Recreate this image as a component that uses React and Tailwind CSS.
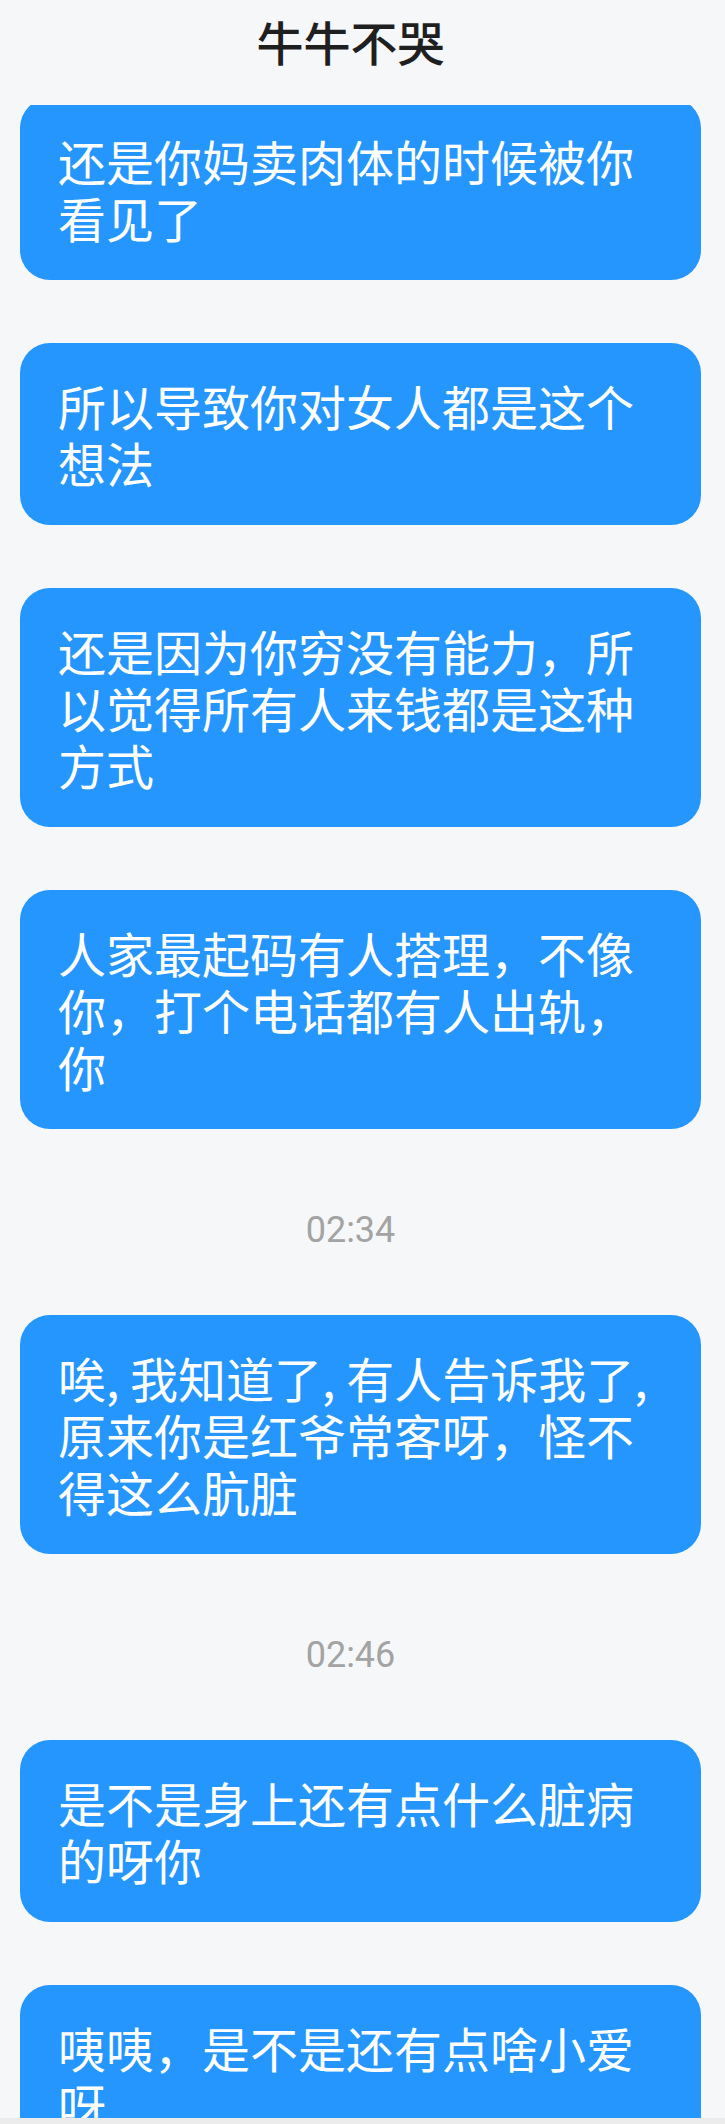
import React from 'react';

const messages = [
  { type: 'text', text: '还是你妈卖肉体的时候被你看见了' },
  { type: 'text', text: '所以导致你对女人都是这个想法' },
  { type: 'text', text: '还是因为你穷没有能力，所以觉得所有人来钱都是这种方式' },
  { type: 'text', text: '人家最起码有人搭理，不像你，打个电话都有人出轨，你' },
  { type: 'time', text: '02:34' },
  { type: 'text', text: '唉, 我知道了, 有人告诉我了, 原来你是红爷常客呀，怪不得这么肮脏' },
  { type: 'time', text: '02:46' },
  { type: 'text', text: '是不是身上还有点什么脏病的呀你' },
  { type: 'text', text: '咦咦，是不是还有点啥小爱呀' },
];

const cjk = { fontFamily: '"Noto Sans CJK SC", "Noto Sans", sans-serif' };

const Bubble = ({ text }) => (
  <div
    className="ml-5 rounded-[30px] bg-[#2496fe] px-[38px] py-[34px] text-[48px] leading-[57px] text-white"
    style={cjk}
  >
    {text}
  </div>
);

const TimeStamp = ({ text }) => (
  <div
    className="h-[60px] pt-[16px] text-center text-[36px] leading-[44px] text-[#a3a3a3]"
    style={{ fontFamily: 'Roboto, "Noto Sans", sans-serif' }}
  >
    {text}
  </div>
);

export default function App() {
  return (
    <div className="flex h-[2124px] w-full flex-col overflow-hidden bg-[#f5f7f9]">
      <header className="h-[105px] w-[701px] shrink-0">
        <h1
          className="pt-[7px] text-center text-[47px] font-medium leading-[68px] text-[#1f1f1f]"
          style={cjk}
        >
          牛牛不哭
        </h1>
      </header>

      <main className="min-h-0 flex-1 overflow-hidden">
        <div className="-mt-[7px] flex w-[701px] flex-col gap-[63px]">
          {messages.map((m, i) =>
            m.type === 'time' ? (
              <TimeStamp key={i} text={m.text} />
            ) : (
              <Bubble key={i} text={m.text} />
            )
          )}
        </div>
      </main>

      <footer className="h-[6px] shrink-0 bg-[#ececec]" />
    </div>
  );
}
